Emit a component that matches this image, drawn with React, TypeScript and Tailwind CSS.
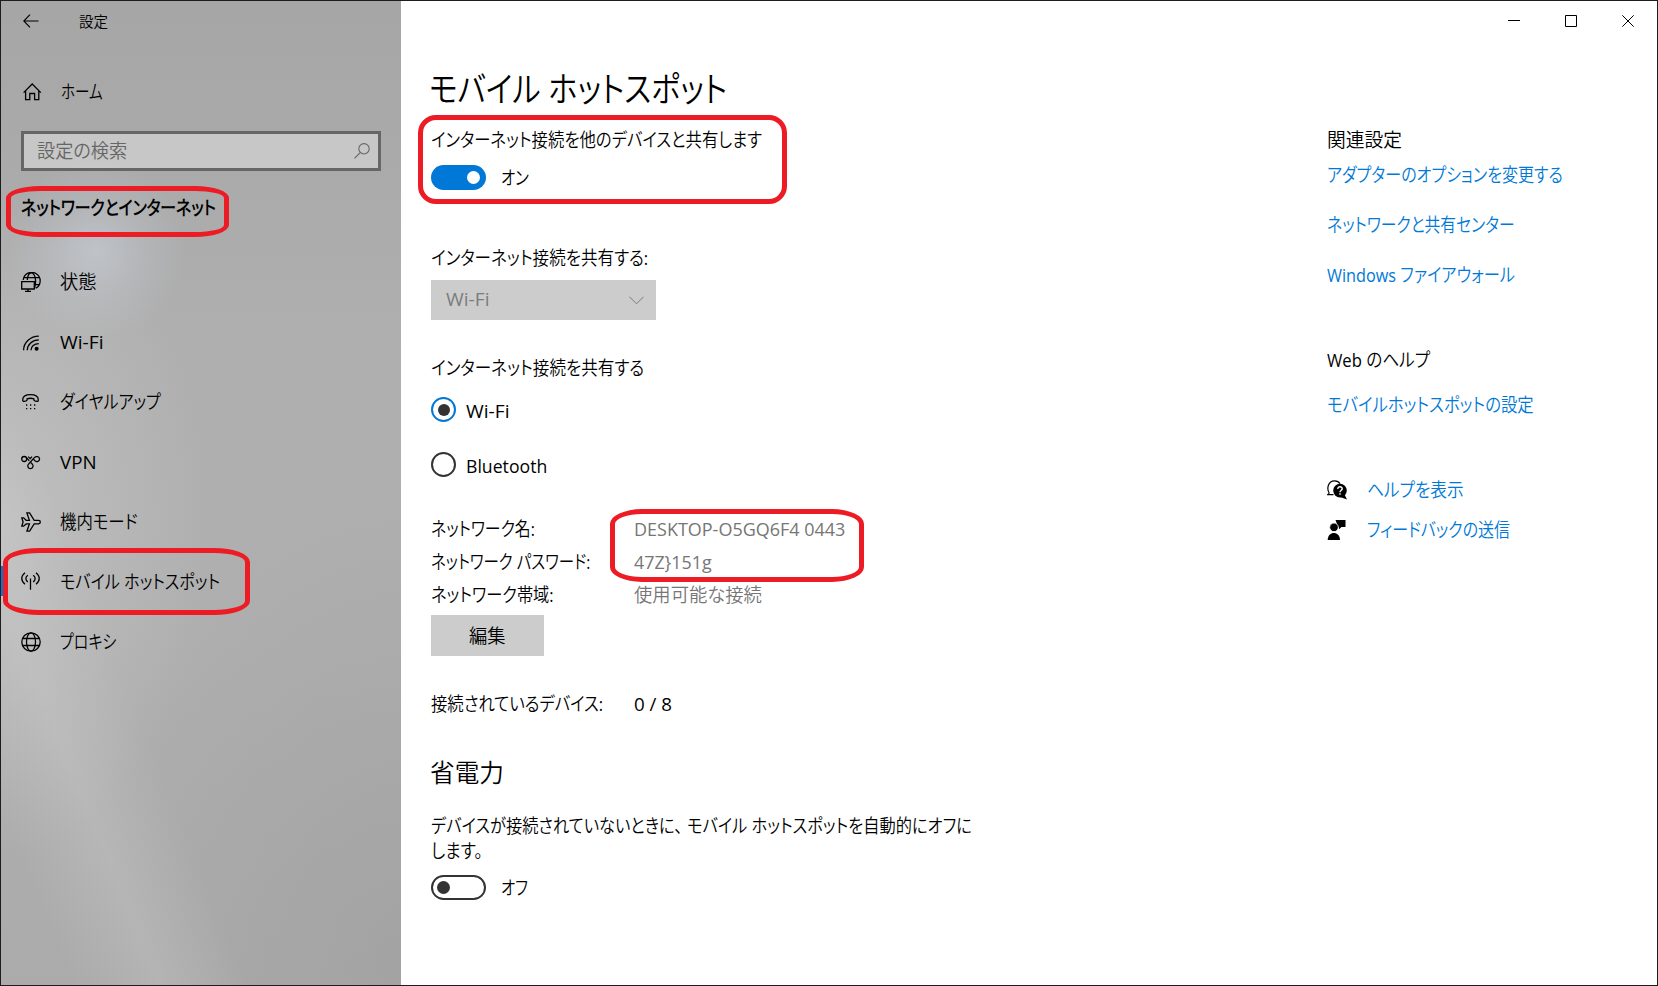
import { useLayoutEffect, useRef, useState, type ReactNode } from "react";

/** A single line of text condensed to the width of its box. */
function Line({ className, children }: { className: string; children: ReactNode }) {
  const box = useRef<HTMLSpanElement>(null);
  const text = useRef<HTMLSpanElement>(null);
  const [scale, setScale] = useState(1);
  useLayoutEffect(() => {
    if (box.current && text.current) {
      setScale(box.current.clientWidth / text.current.offsetWidth);
    }
  }, []);
  return (
    <span ref={box} className={`block shrink-0 whitespace-nowrap ${className}`}>
      <span ref={text} className="inline-block origin-left" style={{ transform: `scaleX(${scale})` }}>
        {children}
      </span>
    </span>
  );
}

function Icon({ children }: { children: ReactNode }) {
  return (
    <svg viewBox="0 0 20 20" className="size-5 shrink-0" fill="none" stroke="currentColor" strokeWidth="1.3">
      {children}
    </svg>
  );
}

const StatusIcon = () => (
  <Icon>
    <path d="M2.2 8A8.5 8.5 0 1 1 14.8 16.3M6.3 8C6.6 3.8 8.4 .8 10.4 .8C12.6 .8 14.6 4.5 14.6 9.2C14.6 12 14.2 14.4 13.4 16.4M2.6 5.6H18.2M14.4 12.6H18.4" />
    <path d="M.7 9.7H13.3V17H.7ZM7 17V19.3M4 19.3H10" />
  </Icon>
);
const WifiIcon = () => (
  <Icon>
    <path d="M2.6 18.3C2.6 10.5 9.5 4.2 17.8 4.2M6.3 18.3C6.3 12.5 11.3 7.9 17.8 7.9M10 18.3C10 14.5 13.2 11.6 17.8 11.6" />
    <circle cx="15.6" cy="16.8" r="2" fill="currentColor" stroke="none" />
  </Icon>
);
const DialIcon = () => (
  <Icon>
    <path d="M1.7 7.9C1.7 4.6 5 2.7 9.5 2.7S17.3 4.6 17.3 7.9C17.3 9.1 16.6 9.6 15.8 9.4L13.8 8.9C13.2 8.7 12.9 8.3 12.9 7.6V6.8C11 6.2 8 6.2 6.1 6.8V7.6C6.1 8.3 5.8 8.7 5.2 8.9L3.2 9.4C2.4 9.6 1.7 9.1 1.7 7.9Z" />
    <path d="M5 13H6.3M9 13H10.3M13 13H14.3M5 16.7H6.3M9 16.7H10.3M13 16.7H14.3" strokeWidth="1.3" />
  </Icon>
);
const VpnIcon = () => (
  <Icon>
    <circle cx="3.2" cy="7" r="2.5" />
    <path d="M5.3 5.6L8.3 8.7M7.2 4.6L9.2 6.6L11 4.6" />
    <path d="M7.6 12L13.6 5.4C15.2 3.9 18.4 4.6 18.6 7C18.6 9.4 15.8 10.3 14.2 9L12.6 7.4" />
    <path d="M7.6 12C5.9 13.7 7 16.7 9.4 16.7S13 13.8 11.2 12L9.6 10.4" />
  </Icon>
);
const PlaneIcon = () => (
  <Icon>
    <path d="M.8 5.8H2.6L5.2 8.3H8.4L5.9 .9H8.6L13.2 8.3H17.6C19.9 8.3 19.9 11.9 17.6 11.9H13.2L8.6 19.2H5.9L8.4 11.9H5.2L2.6 14.2H.8L2.1 10Z" />
  </Icon>
);
const HotspotIcon = () => (
  <Icon>
    <path d="M9.5 6.5V17.7M4 .8C-.3 4.2 -.3 8.8 4 12.2M15 .8C19.3 4.2 19.3 8.8 15 12.2M6.8 3.2C4.2 5.2 4.2 8 6.8 10M12.2 3.2C14.8 5.2 14.8 8 12.2 10" />
  </Icon>
);
const GlobeIcon = () => (
  <Icon>
    <circle cx="10" cy="10" r="9.2" />
    <ellipse cx="10" cy="10" rx="4.5" ry="9.2" />
    <path d="M1.7 6.5H18.3M1.7 13.5H18.3" />
  </Icon>
);

const nav = [
  { icon: <StatusIcon />, label: "状態", width: "w-[37px]" },
  { icon: <WifiIcon />, label: "Wi-Fi", width: "w-[44px]" },
  { icon: <DialIcon />, label: "ダイヤルアップ", width: "w-[101px]" },
  { icon: <VpnIcon />, label: "VPN", width: "w-[37px]" },
  { icon: <PlaneIcon />, label: "機内モード", width: "w-[78px]" },
  { icon: <HotspotIcon />, label: "モバイル ホットスポット", width: "w-[160px]", active: true },
  { icon: <GlobeIcon />, label: "プロキシ", width: "w-[56px]" },
];

const network = [
  { name: "ネットワーク名:", nameWidth: "w-[104px]", value: "DESKTOP-O5GQ6F4 0443", valueWidth: "w-[211px]" },
  { name: "ネットワーク パスワード:", nameWidth: "w-[159px]", value: "47Z}151g", valueWidth: "w-[78px]" },
  { name: "ネットワーク帯域:", nameWidth: "w-[123px]", value: "使用可能な接続", valueWidth: "w-[128px]" },
];

function Sidebar() {
  return (
    <aside className="flex w-[400px] shrink-0 flex-col bg-[#acacac] bg-[radial-gradient(ellipse_90px_90px_at_95px_250px,rgba(205,213,224,0.55),rgba(205,213,224,0.22)_50%,transparent),radial-gradient(ellipse_210px_330px_at_0px_520px,rgba(215,215,215,0.42),transparent),linear-gradient(68deg,transparent_9%,rgba(205,205,205,0.3)_20%,transparent_31%),radial-gradient(ellipse_320px_480px_at_400px_960px,rgba(155,155,155,0.5),transparent),linear-gradient(180deg,#a6a6a6,#afafaf_35%,#afafaf_65%,#ababab)]">
      <div className="flex h-10 items-center pl-[22px]">
        <svg viewBox="0 0 16 14" className="mr-10 h-[14px] w-4" fill="none" stroke="currentColor" strokeWidth="1.1">
          <path d="M15.5 7H1M7 .7L.8 7L7 13.3" />
        </svg>
        <Line className="-mt-px w-[29px] text-[15px]">設定</Line>
      </div>
      <div className="mt-[31px] flex h-10 items-center pl-[22px]">
        <svg viewBox="0 0 19 18" className="mr-[19px] h-[18px] w-[19px]" fill="none" stroke="currentColor" strokeWidth="1.3">
          <path d="M.6 9.6L9.2 1L17.8 9.6M2.6 8V16.6H6.8V10.5H11.6V16.6H15.8V8" />
        </svg>
        <Line className="w-[42px]">ホーム</Line>
      </div>
      <div className="mx-5 mt-[19px] flex h-10 items-center justify-between border-3 border-[#666] bg-white/35 pr-2 pl-[13px] text-[#666]">
        <Line className="w-[90px]">設定の検索</Line>
        <svg viewBox="0 0 16 16" className="size-4" fill="none" stroke="currentColor" strokeWidth="1.1">
          <circle cx="10" cy="5.8" r="5.2" />
          <path d="M6.2 9.6L.5 15.4" />
        </svg>
      </div>
      <div className="relative mt-[17px] flex h-10 items-center pl-5">
        <Line className="w-[195px] font-semibold">ネットワークとインターネット</Line>
        <div className="absolute top-[-2px] left-[5px] h-[51px] w-[223px] rounded-[34px/12px] border-5 border-[#ed1c24]" />
      </div>
      <nav className="mt-[23px] flex flex-col">
        {nav.map((item) => (
          <div key={item.label} className="relative flex h-[60px] items-center">
            <span className={item.active ? "h-[30px] w-[3px] bg-[#0078d7]" : "w-[3px]"} />
            <span className="mt-[2px] mr-[19px] ml-[17px]">{item.icon}</span>
            <Line className={`mt-px ${item.width}`}>{item.label}</Line>
            {item.active && (
              <div className="absolute top-[-3px] left-[2px] h-[67px] w-[247px] rounded-[36px/14px] border-5 border-[#ed1c24]" />
            )}
          </div>
        ))}
      </nav>
    </aside>
  );
}

function TitleButtons() {
  return (
    <div className="flex h-10 items-center justify-end gap-[45px] pr-[23px]">
      <svg viewBox="0 0 12 12" className="size-3" stroke="black"><path d="M0 5.5H12" /></svg>
      <svg viewBox="0 0 12 12" className="size-3" fill="none" stroke="black"><path d="M.5 .5H11.5V11.5H.5Z" /></svg>
      <svg viewBox="0 0 12 12" className="size-3" stroke="black"><path d="M.3 .3L11.7 11.7M11.7 .3L.3 11.7" /></svg>
    </div>
  );
}

function HotspotSettings() {
  return (
    <main className="flex w-[600px] flex-col">
      <h1 className="-ml-[2px] mt-[20px] flex h-[56px] items-center text-[35px] font-light">
        <Line className="w-[298px]">モバイル ホットスポット</Line>
      </h1>
      <section className="relative h-[88px]">
        <div className="flex h-[46px] items-center"><Line className="w-[331px]">インターネット接続を他のデバイスと共有します</Line></div>
        <div className="mt-[2px] flex h-[25px] items-center gap-[15px]">
          <span className="flex h-[25px] w-[55px] items-center justify-end rounded-full bg-[#0078d7] pr-[6px]">
            <span className="size-[13px] rounded-full bg-white" />
          </span>
          <Line className="w-7">オン</Line>
        </div>
        <div className="absolute top-[-2px] left-[-13px] h-[89px] w-[369px] rounded-[18px] border-5 border-[#ed1c24]" />
      </section>

      <div className="mt-[41px] flex h-6 items-center"><Line className="w-[217px]">インターネット接続を共有する:</Line></div>
      <div className="mt-[10px] flex h-10 w-[225px] items-center justify-between bg-[#ccc] pr-3 pl-[15px] text-[#7c7c7c]">
        <Line className="-mt-[2px] w-[44px]">Wi-Fi</Line>
        <svg viewBox="0 0 15 9" className="h-[9px] w-[15px]" fill="none" stroke="currentColor"><path d="M.4 .7L7.5 7.8L14.6 .7" /></svg>
      </div>

      <div className="mt-9 flex h-6 items-center"><Line className="w-[213px]">インターネット接続を共有する</Line></div>
      <div className="mt-[17px] flex h-[25px] items-center gap-[10px]">
        <span className="flex size-[25px] items-center justify-center rounded-full border-[2.5px] border-[#0078d7]">
          <span className="size-3 rounded-full bg-[#333]" />
        </span>
        <Line className="mt-[2px] w-[44px]">Wi-Fi</Line>
      </div>
      <div className="mt-[30px] flex h-[25px] items-center gap-[10px]">
        <span className="size-[25px] rounded-full border-[2.5px] border-[#333]" />
        <Line className="mt-[2px] w-[81px]">Bluetooth</Line>
      </div>

      <section className="relative mt-[35px]">
        {network.map((row) => (
          <div key={row.name} className="flex h-[33px] items-center">
            <div className="w-[203px]"><Line className={row.nameWidth}>{row.name}</Line></div>
            <Line className={`text-[#767676] ${row.valueWidth}`}>{row.value}</Line>
          </div>
        ))}
        <div className="absolute top-[-3px] left-[179px] h-[73px] w-[254px] rounded-[32px/15px] border-5 border-[#ed1c24]" />
      </section>
      <button className="mt-1 flex h-[41px] w-[113px] items-center justify-center bg-[#ccc]">
        <Line className="w-[37px]">編集</Line>
      </button>

      <div className="mt-9 flex h-6 items-center">
        <div className="w-[203px]"><Line className="w-[172px]">接続されているデバイス:</Line></div>
        <Line className="w-[38px]">0 / 8</Line>
      </div>
      <h2 className="-ml-px mt-[38px] flex h-9 items-center text-[25px]"><Line className="w-[74px]">省電力</Line></h2>
      <div className="mt-[23px] flex flex-col">
        <div className="flex h-[25px] items-center">
          <Line className="w-[541px]">
            デバイスが接続されていないときに<span className="tracking-[5px]">、</span>モバイル ホットスポットを自動的にオフに
          </Line>
        </div>
        <div className="flex h-[25px] items-center"><Line className="w-[52px]">します。</Line></div>
      </div>
      <div className="mt-3 flex h-[25px] items-center gap-[15px]">
        <span className="flex h-[25px] w-[55px] items-center rounded-full border-[2.5px] border-[#333] pl-1">
          <span className="size-[13px] rounded-full bg-[#333]" />
        </span>
        <Line className="w-[27px]">オフ</Line>
      </div>
    </main>
  );
}

function Related() {
  return (
    <div className="mt-[87px] flex w-[330px] flex-col text-[#0078d7]">
      <div className="flex h-6 items-center text-black"><Line className="w-[75px]">関連設定</Line></div>
      <div className="mt-[11px] flex h-6 items-center"><Line className="w-[236px]">アダプターのオプションを変更する</Line></div>
      <div className="mt-[26px] flex h-6 items-center"><Line className="w-[188px]">ネットワークと共有センター</Line></div>
      <div className="mt-[26px] flex h-6 items-center"><Line className="w-[188px]">Windows ファイアウォール</Line></div>
      <div className="mt-[61px] flex h-6 items-center text-black"><Line className="w-[103px]">Web のヘルプ</Line></div>
      <div className="mt-[21px] flex h-6 items-center"><Line className="w-[207px]">モバイルホットスポットの設定</Line></div>
      <div className="mt-[61px] flex h-6 items-center gap-5">
        <svg viewBox="0 0 20 20" className="size-5 text-black">
          <path d="M2.3 13.2C-.7 8.4 1.2 1 7.5 .8C10 .7 12 2 13 3.8M2.3 13.2L.8 14.6H6.5" fill="none" stroke="currentColor" strokeWidth="1.2" />
          <circle cx="13" cy="10.6" r="6.8" fill="currentColor" />
          <path d="M17.5 14.5L20 19.6L13 17Z" fill="currentColor" />
          <path d="M10.8 9C10.8 6 15.4 6.2 15.2 8.9C15.1 10.3 13 10.3 13 12.2M13 13.3V14.8" fill="none" stroke="white" strokeWidth="1.4" />
        </svg>
        <Line className="w-[97px]">ヘルプを表示</Line>
      </div>
      <div className="mt-4 flex h-6 items-center gap-5">
        <svg viewBox="0 0 20 20" className="size-5 text-black" fill="currentColor">
          <path d="M8.5 0H18.5V7H14.5L12 9.2V7H11Z" />
          <circle cx="7" cy="7.3" r="4.3" stroke="white" strokeWidth=".8" />
          <path d="M.7 20C.7 10.5 13 10.5 13 20Z" />
        </svg>
        <Line className="w-[143px]">フィードバックの送信</Line>
      </div>
    </div>
  );
}

export default function App() {
  return (
    <div className="flex h-[986px] w-[1658px] overflow-hidden border border-[#1f1c1e] bg-white font-['Open_Sans','Noto_Sans_CJK_JP_DemiLight','Noto_Sans_CJK_JP',sans-serif] text-[18.75px] leading-6 text-black [font-feature-settings:'palt']">
      <Sidebar />
      <div className="flex min-w-0 flex-1 flex-col">
        <TitleButtons />
        <div className="flex justify-between pl-[30px]">
          <HotspotSettings />
          <Related />
        </div>
      </div>
    </div>
  );
}
